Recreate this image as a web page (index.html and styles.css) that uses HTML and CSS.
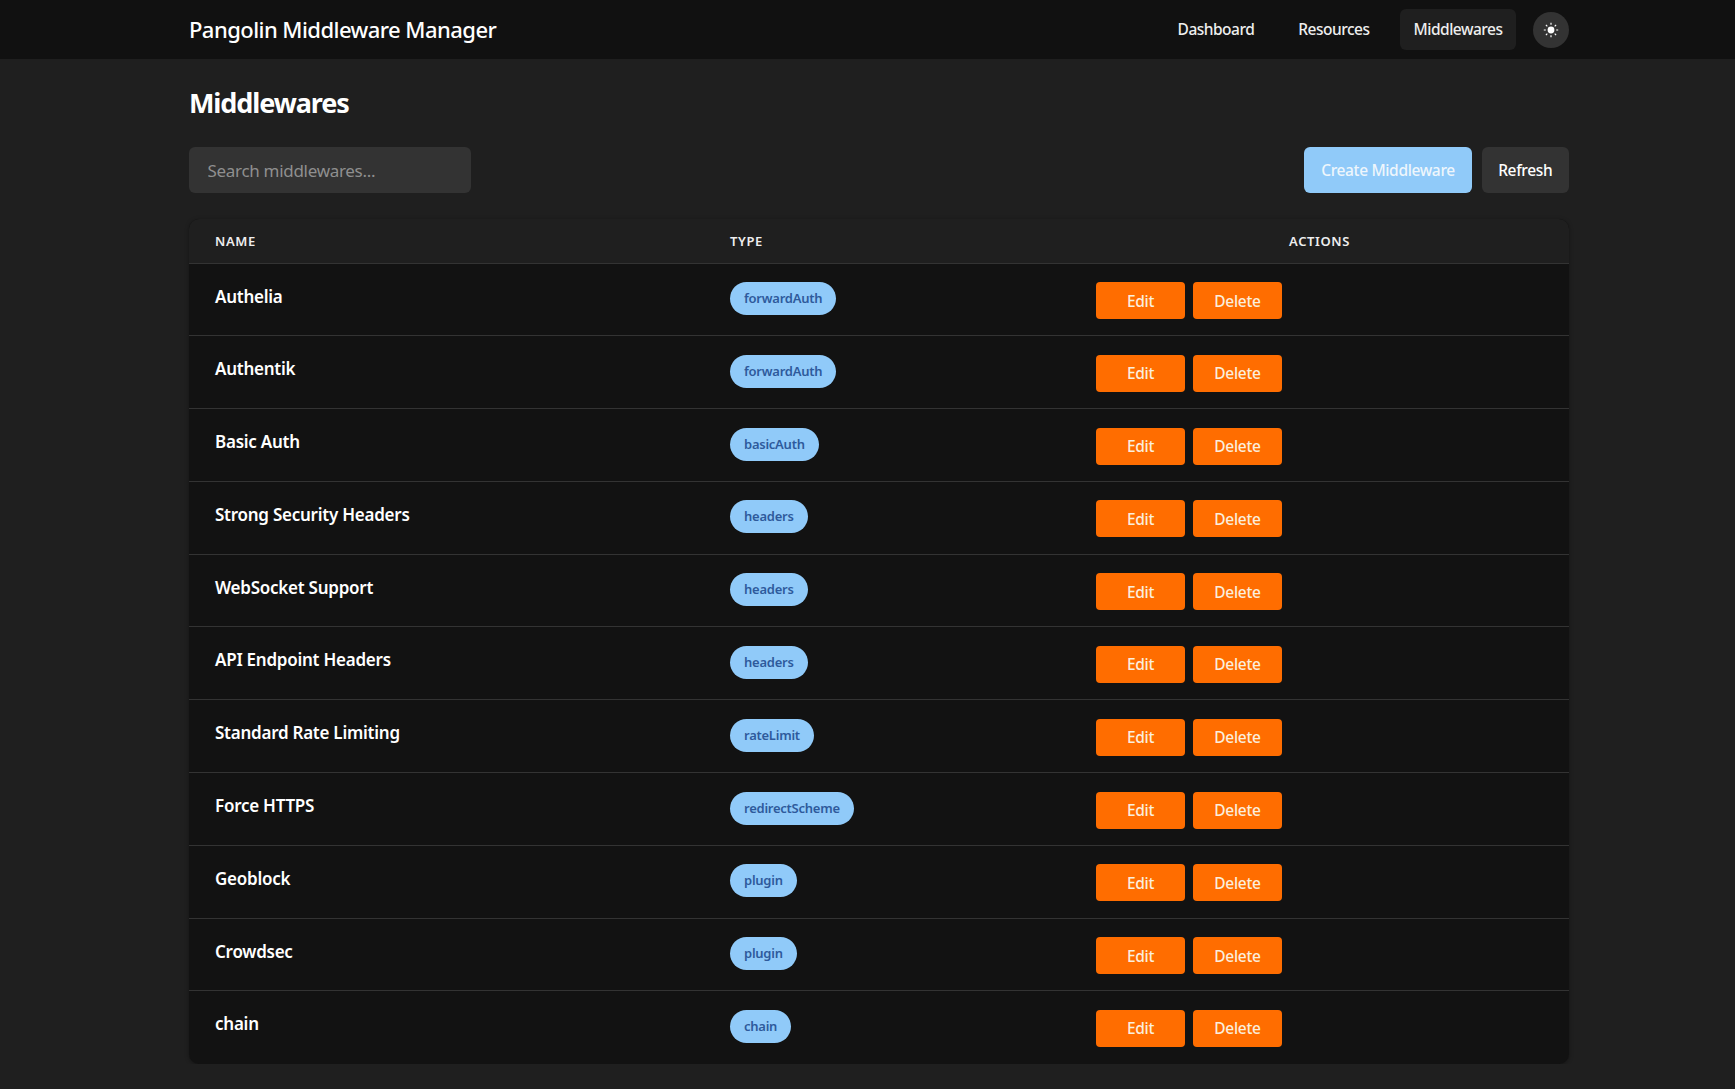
FILE: index.html
```html
<!DOCTYPE html>
<html lang="en">
<head>
  <meta charset="UTF-8" />
  <meta name="viewport" content="width=device-width, initial-scale=1.0"/>
  <title>Pangolin Middleware Manager</title>
  <link rel="stylesheet" href="styles.css">
</head>
<body>
  <nav class="navbar">
    <div class="container nav-inner">
      <div class="brand">Pangolin Middleware Manager</div>
      <div class="nav-links">
        <a class="nav-link" href="#">Dashboard</a>
        <a class="nav-link" href="#">Resources</a>
        <a class="nav-link active" href="#">Middlewares</a>
        <button class="theme-toggle" type="button" aria-label="Toggle theme">
          <svg width="16" height="16" viewBox="0 0 16 16" aria-hidden="true">
            <circle cx="8" cy="8" r="3.4" fill="#fff"/>
            <path d="M8 .8v2M8 13.2v2M.8 8h2M13.2 8h2M2.9 2.9l1.4 1.4M11.7 11.7l1.4 1.4M2.9 13.1l1.4-1.4M11.7 4.3l1.4-1.4" stroke="#fff" stroke-width="1.2" fill="none"/>
          </svg>
        </button>
      </div>
    </div>
  </nav>

  <main class="container">
    <h1>Middlewares</h1>

    <div class="toolbar">
      <input class="search" type="text" placeholder="Search middlewares..." />
      <div class="toolbar-buttons">
        <button class="btn btn-primary" type="button">Create Middleware</button>
        <button class="btn btn-secondary" type="button">Refresh</button>
      </div>
    </div>

    <div class="table-card">
      <table>
        <thead>
          <tr>
            <th class="col-name">Name</th>
            <th class="col-type">Type</th>
            <th class="col-actions">Actions</th>
          </tr>
        </thead>
        <tbody>
          <tr>
            <td class="name">Authelia</td>
            <td><span class="badge">forwardAuth</span></td>
            <td class="actions"><button class="btn-row" type="button">Edit</button><button class="btn-row" type="button">Delete</button></td>
          </tr>
          <tr>
            <td class="name">Authentik</td>
            <td><span class="badge">forwardAuth</span></td>
            <td class="actions"><button class="btn-row" type="button">Edit</button><button class="btn-row" type="button">Delete</button></td>
          </tr>
          <tr>
            <td class="name">Basic Auth</td>
            <td><span class="badge">basicAuth</span></td>
            <td class="actions"><button class="btn-row" type="button">Edit</button><button class="btn-row" type="button">Delete</button></td>
          </tr>
          <tr>
            <td class="name">Strong Security Headers</td>
            <td><span class="badge">headers</span></td>
            <td class="actions"><button class="btn-row" type="button">Edit</button><button class="btn-row" type="button">Delete</button></td>
          </tr>
          <tr>
            <td class="name">WebSocket Support</td>
            <td><span class="badge">headers</span></td>
            <td class="actions"><button class="btn-row" type="button">Edit</button><button class="btn-row" type="button">Delete</button></td>
          </tr>
          <tr>
            <td class="name">API Endpoint Headers</td>
            <td><span class="badge">headers</span></td>
            <td class="actions"><button class="btn-row" type="button">Edit</button><button class="btn-row" type="button">Delete</button></td>
          </tr>
          <tr>
            <td class="name">Standard Rate Limiting</td>
            <td><span class="badge">rateLimit</span></td>
            <td class="actions"><button class="btn-row" type="button">Edit</button><button class="btn-row" type="button">Delete</button></td>
          </tr>
          <tr>
            <td class="name">Force HTTPS</td>
            <td><span class="badge">redirectScheme</span></td>
            <td class="actions"><button class="btn-row" type="button">Edit</button><button class="btn-row" type="button">Delete</button></td>
          </tr>
          <tr>
            <td class="name">Geoblock</td>
            <td><span class="badge">plugin</span></td>
            <td class="actions"><button class="btn-row" type="button">Edit</button><button class="btn-row" type="button">Delete</button></td>
          </tr>
          <tr>
            <td class="name">Crowdsec</td>
            <td><span class="badge">plugin</span></td>
            <td class="actions"><button class="btn-row" type="button">Edit</button><button class="btn-row" type="button">Delete</button></td>
          </tr>
          <tr>
            <td class="name">chain</td>
            <td><span class="badge">chain</span></td>
            <td class="actions"><button class="btn-row" type="button">Edit</button><button class="btn-row" type="button">Delete</button></td>
          </tr>
        </tbody>
      </table>
    </div>
  </main>
</body>
</html>
```

FILE: styles.css
```css
* {
  box-sizing: border-box;
}

body {
  margin: 0;
  background: #1f1f1f;
  color: #fff;
  font-family: "Noto Sans", Arial, sans-serif;
  font-size: 16px;
}

.container {
  width: 1380px;
  margin: 0 0 0 189px;
}

.navbar {
  height: 59px;
  background: #111;
}

.nav-inner {
  height: 100%;
  display: flex;
  justify-content: space-between;
  align-items: center;
}

.brand {
  padding-bottom: 2px;
  font-size: 22px;
  font-weight: 500;
  letter-spacing: -0.55px;
}

.nav-links {
  display: flex;
  align-items: center;
}

.nav-link {
  display: block;
  height: 41px;
  line-height: 41px;
  padding: 0 13.5px;
  margin-left: 17px;
  color: #eee;
  font-size: 15.5px;
  font-weight: 500;
  letter-spacing: -0.5px;
  text-decoration: none;
  border-radius: 6px;
}

.nav-link.active {
  background: #1f1f1f;
}

.theme-toggle {
  width: 36px;
  height: 36px;
  margin-left: 17px;
  padding: 0;
  border: none;
  border-radius: 50%;
  background: #333;
  display: flex;
  justify-content: center;
  align-items: center;
}

h1 {
  margin: 0;
  padding-top: 25px;
  height: 88px;
  font-size: 27px;
  line-height: 38px;
  font-weight: 700;
  letter-spacing: -1.1px;
}

.toolbar {
  display: flex;
  justify-content: space-between;
  height: 46px;
  margin-bottom: 26px;
}

.search {
  width: 282px;
  height: 46px;
  padding: 0 18.5px;
  background: #333;
  border: none;
  border-radius: 6px;
  color: #fff;
  font-family: inherit;
  font-size: 17px;
  letter-spacing: -0.3px;
}

.search::placeholder {
  color: #8f8f8f;
  opacity: 1;
}

.toolbar-buttons {
  display: flex;
  gap: 9.5px;
}

.btn {
  height: 46px;
  padding: 0;
  border: none;
  border-radius: 6px;
  font-family: inherit;
  font-size: 15.5px;
  font-weight: 500;
  letter-spacing: -0.35px;
  white-space: nowrap;
}

.btn-primary {
  width: 168px;
  background: #90caf9;
  color: #eef6fc;
}

.btn-secondary {
  width: 87.5px;
  background: #333;
  color: #fff;
}

.table-card {
  background: #121212;
  border-radius: 10px;
  overflow: hidden;
  box-shadow: 0 1px 4px rgba(0, 0, 0, 0.35);
}

table {
  width: 100%;
  border-collapse: collapse;
  table-layout: fixed;
}

th {
  height: 44px;
  padding: 0 26px;
  background: #1f1f1f;
  border-bottom: 1px solid #333;
  color: #eee;
  font-size: 13px;
  font-weight: 600;
  text-align: left;
  text-transform: uppercase;
  letter-spacing: 0.6px;
}

.col-name {
  width: 515px;
}

.col-type {
  width: 366px;
}

th.col-actions {
  text-align: center;
}

tbody tr {
  height: 72.8px;
  border-bottom: 1px solid #333;
}

tbody tr:last-child {
  border-bottom: none;
}

td {
  padding: 18.5px 26px 0;
  vertical-align: top;
}

td.name {
  padding-top: 19px;
  font-size: 17px;
  line-height: 28px;
  font-weight: 600;
  letter-spacing: -0.25px;
}

.badge {
  display: inline-block;
  height: 33px;
  line-height: 33px;
  padding: 0 14px;
  border-radius: 17px;
  background: #90caf9;
  color: #2e5a9c;
  font-size: 13px;
  font-weight: 600;
  letter-spacing: -0.25px;
}

.actions {
  display: flex;
  gap: 8px;
}

.btn-row {
  width: 89px;
  height: 37px;
  padding: 0;
  border: none;
  border-radius: 4px;
  background: #ff6d00;
  color: #fbeedd;
  font-family: inherit;
  font-size: 15.5px;
  font-weight: 500;
  letter-spacing: -0.3px;
}
```
